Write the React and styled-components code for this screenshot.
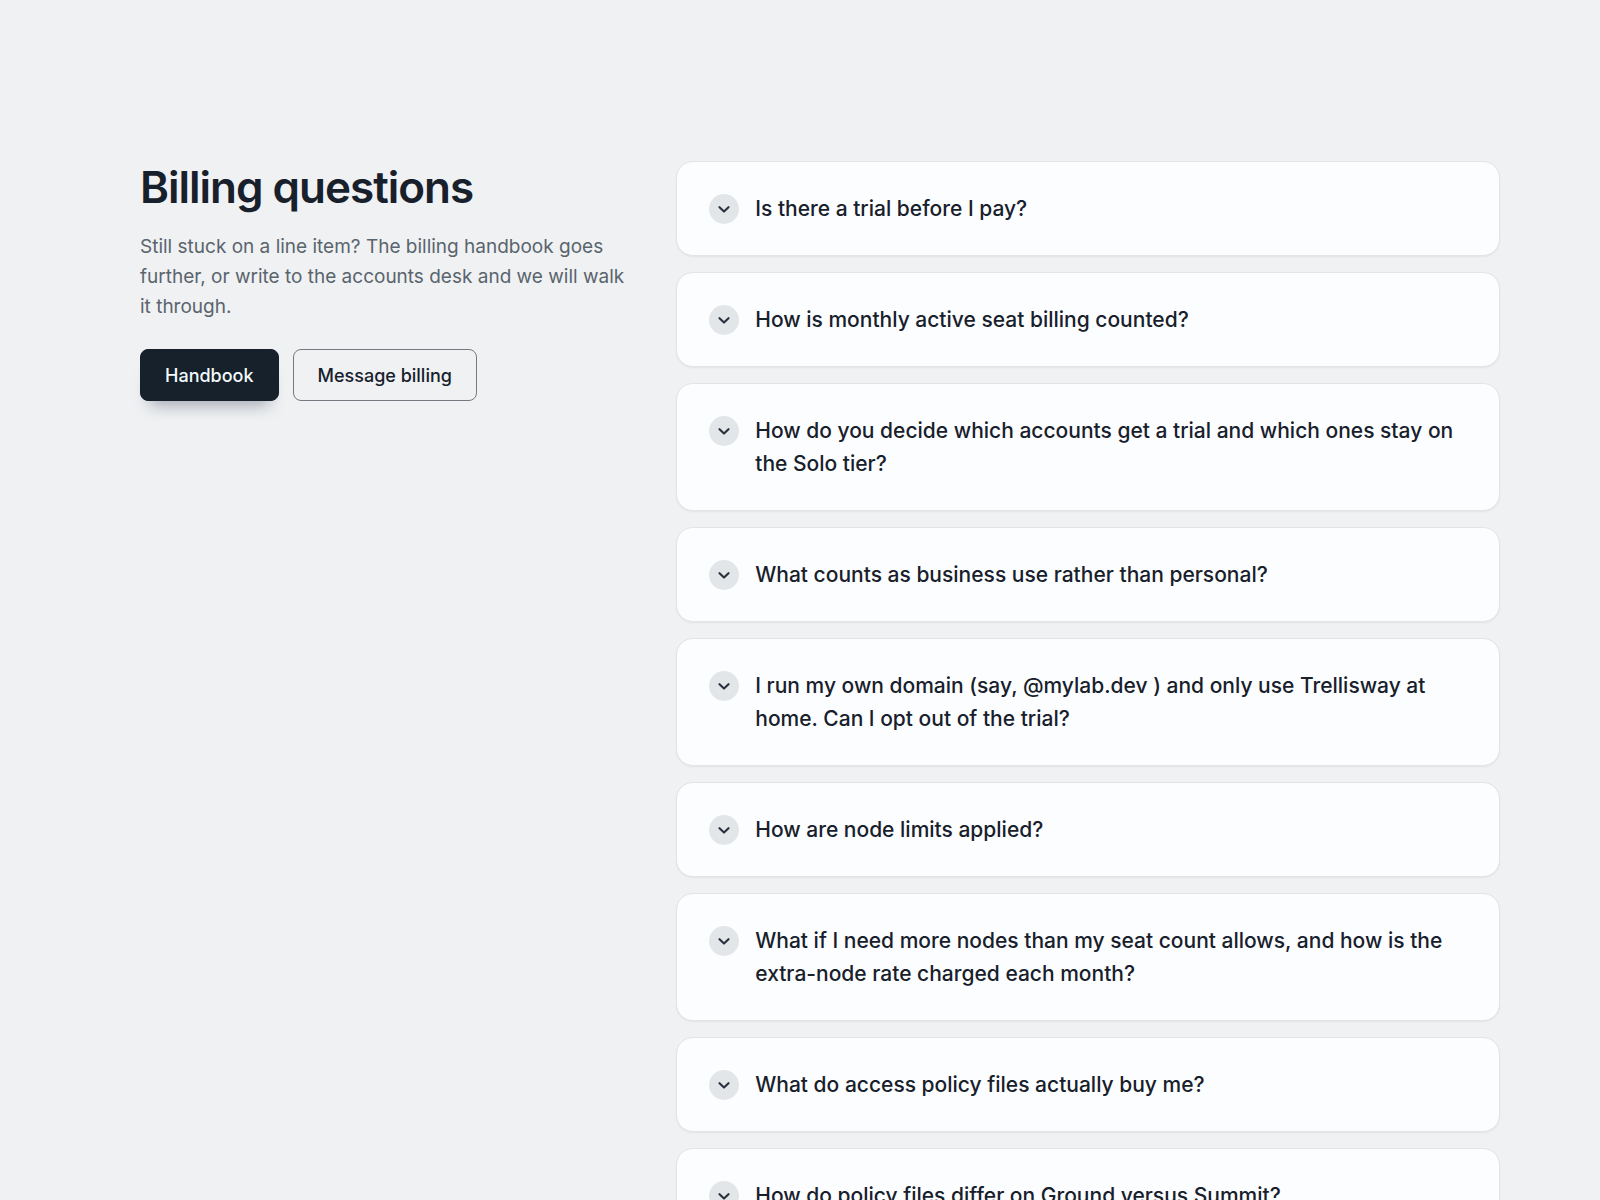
import React from "react";
import styled, { createGlobalStyle } from "styled-components";

const GlobalStyle = createGlobalStyle`
  *, *::before, *::after { box-sizing: border-box; }
  body {
    margin: 0;
    background: #eff1f3;
    color: #17202b;
    font-family: Inter, "Liberation Sans", sans-serif;
  }
`;

const Page = styled.div`
  height: 100vh;
  overflow-y: auto;
  scrollbar-width: none;
`;

const Section = styled.main`
  display: grid;
  grid-template-columns: minmax(0, 3fr) minmax(0, 5fr);
  gap: 42px;
  padding: 161px 100px 0 140px;
`;

const Intro = styled.header`
  display: flex;
  flex-direction: column;
`;

const Title = styled.h1`
  margin: 0;
  font-size: 44px;
  line-height: 52px;
  font-weight: 600;
  letter-spacing: -1px;
`;

const Lead = styled.p`
  margin: 19px 0 27px;
  font-size: 19px;
  line-height: 30px;
  color: #5a646d;
`;

const Actions = styled.div`
  display: flex;
  gap: 14px;
`;

const ActionLink = styled.a`
  display: inline-flex;
  align-items: center;
  height: 52px;
  padding: 0 24px;
  border: 1px solid ${(p) => (p.$solid ? "#16212b" : "#747a80")};
  border-radius: 8px;
  background: ${(p) => (p.$solid ? "#16212b" : "transparent")};
  color: ${(p) => (p.$solid ? "#f3f9fc" : "#17202b")};
  box-shadow: ${(p) => (p.$solid ? "0 14px 16px -10px rgba(22, 33, 60, 0.36)" : "none")};
  font-size: 18px;
  font-weight: 500;
  text-decoration: none;
`;

const List = styled.div`
  display: flex;
  flex-direction: column;
  gap: 16px;
`;

const Item = styled.details`
  border: 1px solid #e2e5e8;
  border-radius: 17px;
  background: #fcfdff;
  box-shadow: 0 1px 2px rgba(23, 32, 43, 0.06);
`;

const Question = styled.summary`
  display: flex;
  gap: 16px;
  padding: 30px 30px 30px 32px;
  cursor: pointer;
  list-style: none;
  font-size: 21px;
  line-height: 33px;
  font-weight: 500;
`;

const Badge = styled.span`
  display: grid;
  place-items: center;
  flex: none;
  width: 30px;
  height: 30px;
  margin-top: 2px;
  border-radius: 50%;
  background: #e3e6e9;
`;

const questions = [
  "Is there a trial before I pay?",
  "How is monthly active seat billing counted?",
  "How do you decide which accounts get a trial and which ones stay on the Solo tier?",
  "What counts as business use rather than personal?",
  "I run my own domain (say, @mylab.dev ) and only use Trellisway at home. Can I opt out of the trial?",
  "How are node limits applied?",
  "What if I need more nodes than my seat count allows, and how is the extra-node rate charged each month?",
  "What do access policy files actually buy me?",
  "How do policy files differ on Ground versus Summit?",
];

function Chevron() {
  return (
    <svg width="12" height="8" viewBox="0 0 12 8" fill="none" aria-hidden="true">
      <path d="M1.5 2.2 6 6.6l4.5-4.4" stroke="#28313c" strokeWidth="2.1" strokeLinecap="round" strokeLinejoin="round" />
    </svg>
  );
}

export default function App() {
  return (
    <Page>
      <GlobalStyle />
      <Section>
        <Intro>
          <Title>Billing questions</Title>
          <Lead>
            Still stuck on a line item? The billing handbook goes further, or write to the accounts desk and we will walk it through.
          </Lead>
          <Actions>
            <ActionLink href="#handbook" $solid>Handbook</ActionLink>
            <ActionLink href="#message">Message billing</ActionLink>
          </Actions>
        </Intro>
        <List>
          {questions.map((question) => (
            <Item key={question}>
              <Question>
                <Badge><Chevron /></Badge>
                <span>{question}</span>
              </Question>
            </Item>
          ))}
        </List>
      </Section>
    </Page>
  );
}
